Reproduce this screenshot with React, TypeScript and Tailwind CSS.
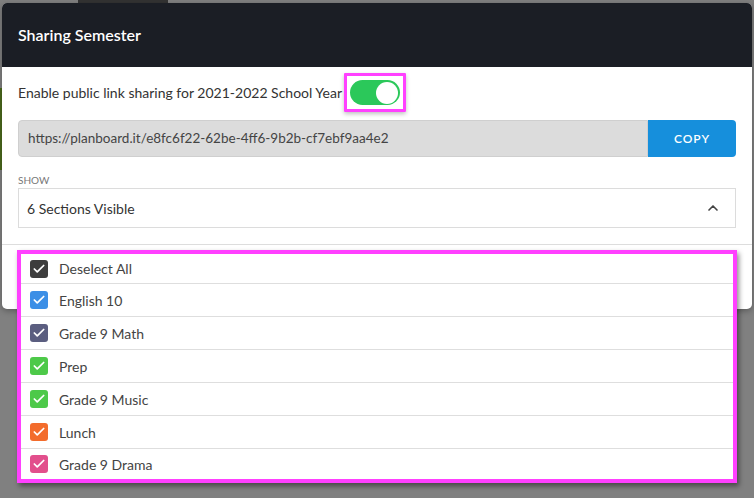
import * as React from "react";
import { Check, ChevronUp } from "lucide-react";

const sections = [
  { name: "Deselect All", color: "bg-[#3d3d3d]" },
  { name: "English 10", color: "bg-[#3c8fe6]" },
  { name: "Grade 9 Math", color: "bg-[#5b5e80]" },
  { name: "Prep", color: "bg-[#4dc949]" },
  { name: "Grade 9 Music", color: "bg-[#4dc949]" },
  { name: "Lunch", color: "bg-[#f36c2c]" },
  { name: "Grade 9 Drama", color: "bg-[#e24f8c]" },
];

function Toggle() {
  return (
    <div className="ml-[2px] rounded-[1px] border-[3px] border-[#ff40ff] px-[3px] py-[4px] shadow-[0_2px_4px_rgba(0,0,0,0.25)]">
      <div className="flex h-[25px] w-[50px] items-center justify-end rounded-full bg-[#2bc85a] px-[2px]">
        <div className="h-[22px] w-[22px] rounded-full bg-white" />
      </div>
    </div>
  );
}

function SectionList() {
  return (
    <div className="absolute left-[17px] top-[250px] w-[720px] border-4 border-[#ff40ff] bg-white shadow-[2px_3px_5px_rgba(0,0,0,0.45)]">
      {sections.map((s, i) => (
        <div
          key={s.name}
          className={
            "flex items-center gap-[11px] border-[#dedede] pl-[9px] " +
            (i === 0 ? "h-[30px] border-b" : i === sections.length - 1 ? "h-[30px]" : "h-[33px] border-b")
          }
        >
          <div className={"flex h-[18px] w-[18px] items-center justify-center rounded-[3px] " + s.color}>
            <Check size={14} strokeWidth={3} className="text-white" />
          </div>
          <span className="text-[14px] text-[#444]">{s.name}</span>
        </div>
      ))}
    </div>
  );
}

export default function App() {
  return (
    <div
      className="relative h-[498px] w-[754px] overflow-hidden bg-[#808080]"
      style={{ fontFamily: "Lato, 'Open Sans', sans-serif" }}
    >
      <div className="flex h-[3px]">
        <div className="ml-[78px] w-[90px] bg-[#333]" />
      </div>
      <div className="absolute left-0 top-[88px] h-[82px] w-[2px] bg-[#4b6a1c]" />
      <div className="relative mx-[2px] h-[306px] rounded-[5px] bg-white shadow-[0_2px_6px_rgba(0,0,0,0.3)]">
        <div className="flex h-[64px] items-center rounded-t-[5px] bg-[#1b1e25] px-4">
          <h1 className="text-[16px] font-semibold text-white">Sharing Semester</h1>
        </div>
        <div className="px-4">
          <div className="flex items-center pt-[6px]">
            <span className="text-[14px] text-[#333]">
              Enable public link sharing for 2021-2022 School Year
            </span>
            <Toggle />
          </div>
          <div className="mt-[8px] flex h-[37px]">
            <div className="flex flex-1 items-center rounded-l-[4px] border border-[#cfcfcf] bg-[#dcdcdc] px-[9px] text-[13.5px] text-[#444]">
              https://planboard.it/e8fc6f22-62be-4ff6-9b2b-cf7ebf9aa4e2
            </div>
            <button className="w-[88px] rounded-r-[4px] bg-[#168fdc] text-[12px] font-semibold tracking-[0.08em] text-white">
              COPY
            </button>
          </div>
          <div className="mt-[16px] text-[10px] uppercase leading-[15px] text-[#777]">Show</div>
          <div className="flex h-[40px] items-center justify-between border border-[#dcdcdc] pl-[8px] pr-[14px]">
            <span className="text-[14px] text-[#333]">6 Sections Visible</span>
            <ChevronUp size={16} strokeWidth={2.5} className="text-[#444]" />
          </div>
          <div className="-mx-4 mt-[16px] border-t border-[#dddddd]" />
        </div>
      </div>
      <SectionList />
    </div>
  );
}
